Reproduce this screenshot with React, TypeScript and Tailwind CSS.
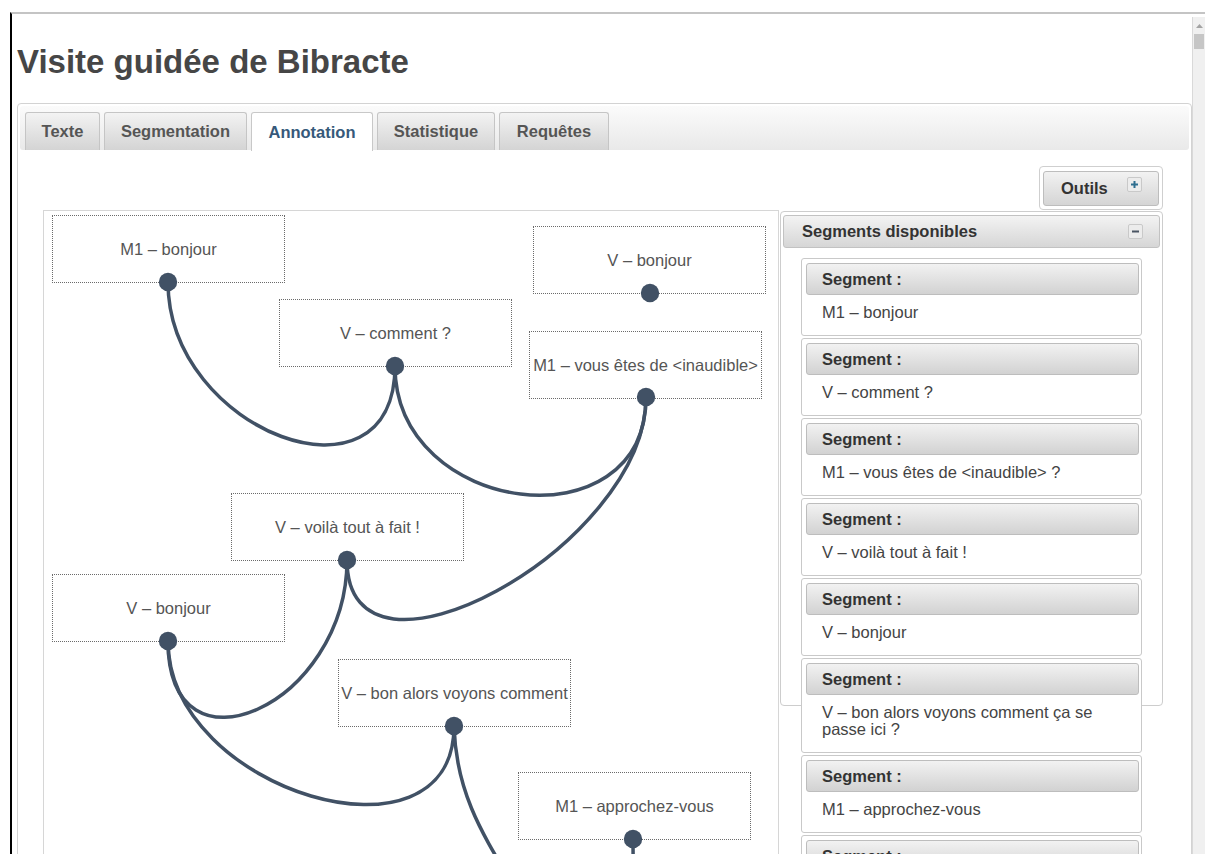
import React from "react";

const tabs = [
  { label: "Texte", w: "w-[75px]", active: false },
  { label: "Segmentation", w: "w-[143px]", active: false },
  { label: "Annotation", w: "w-[122px]", active: true },
  { label: "Statistique", w: "w-[118px]", active: false },
  { label: "Requêtes", w: "w-[110px]", active: false },
];

const nodes = [
  { text: "M1 – bonjour", x: 8, y: 4 },
  { text: "V – bonjour", x: 489, y: 15 },
  { text: "V – comment ?", x: 235, y: 88 },
  { text: "M1 – vous êtes de <inaudible>", x: 485, y: 120 },
  { text: "V – voilà tout à fait !", x: 187, y: 282 },
  { text: "V – bonjour", x: 8, y: 363 },
  { text: "V – bon alors voyons comment", x: 294, y: 448 },
  { text: "M1 – approchez-vous", x: 474, y: 561 },
];

const circles: [number, number][] = [
  [124, 71],
  [606, 82],
  [351, 155],
  [602, 186],
  [303, 349],
  [124, 430],
  [410, 515],
  [589, 628],
];

const paths = [
  "M124 71 C124 221, 351 305, 351 155",
  "M351 155 C351 305, 602 336, 602 186",
  "M602 186 C602 336, 303 499, 303 349",
  "M303 349 C303 494, 124 575, 124 430",
  "M124 430 C124 580, 410 665, 410 515",
  "M410 515 C412 579, 436 619, 466 669",
  "M589 628 C589 660, 590 680, 592 700",
];

const segments = [
  "M1 – bonjour",
  "V – comment ?",
  "M1 – vous êtes de <inaudible> ?",
  "V – voilà tout à fait !",
  "V – bonjour",
  "V – bon alors voyons comment ça se passe ici ?",
  "M1 – approchez-vous",
  "V – approchez-vous",
];

function PlusIcon() {
  return (
    <div className="w-[15px] h-[15px] rounded-[2px] border border-[#c9c9c9] bg-[#ececec] flex items-center justify-center">
      <svg width="9" height="9" viewBox="0 0 9 9">
        <rect x="3.5" y="1" width="2" height="7" fill="#2f6f8f" />
        <rect x="1" y="3.5" width="7" height="2" fill="#2f6f8f" />
      </svg>
    </div>
  );
}

function MinusIcon() {
  return (
    <div className="w-[15px] h-[15px] rounded-[2px] border border-[#c9c9c9] bg-[#ececec] flex items-center justify-center">
      <svg width="9" height="9" viewBox="0 0 9 9">
        <rect x="1" y="3.5" width="7" height="2" fill="#4a5563" />
      </svg>
    </div>
  );
}

export default function App() {
  return (
    <div className="w-[1205px] h-[854px] overflow-hidden bg-white pl-[10px] pt-[12px] font-['Liberation_Sans',Arial,sans-serif]">
      <div className="flex h-[842px] border-l-2 border-l-black border-t-2 border-t-[#c4c4c4]">
        {/* main */}
        <div className="w-[1180px] flex-none pl-[5px] overflow-hidden">
          <h1 className="mt-[29px] h-[38px] leading-[38px] text-[33px] font-bold text-[#464646] whitespace-nowrap">
            Visite guidée de Bibracte
          </h1>
          <div className="mt-[22px] w-[1175px] h-[800px] border border-[#d3d3d3] rounded-[4px] p-[2px]">
            {/* tab bar */}
            <div className="h-[44px] rounded-[3px] bg-linear-to-b from-[#fbfbfb] to-[#e9e9e9] pl-[5px] pt-[6px] flex gap-[4px]">
              {tabs.map((t) => (
                <div
                  key={t.label}
                  className={
                    t.active
                      ? `${t.w} h-[39px] flex items-center justify-center border border-b-0 border-[#c8c8c8] rounded-t-[3px] bg-white text-[16.5px] font-bold text-[#36597a]`
                      : `${t.w} h-[38px] flex items-center justify-center border border-b-0 border-[#c5c5c5] rounded-t-[3px] bg-linear-to-b from-[#f3f3f3] to-[#d4d4d4] text-[16.5px] font-bold text-[#555]`
                  }
                >
                  {t.label}
                </div>
              ))}
            </div>
            {/* content */}
            <div className="pt-[16px] pl-[23px]">
              <div className="w-[1120px]">
                <div className="flex justify-end">
                  <div className="w-[124px] h-[44px] border border-[#cfcfcf] rounded-[4px] px-[3px] pt-[4px] pb-[3px]">
                    <div className="h-full border border-[#bdbdbd] rounded-[3px] bg-linear-to-b from-[#f2f2f2] to-[#d5d5d5] flex pl-[17px] pr-[16px]">
                      <span className="self-center text-[16.5px] font-bold text-[#333]">Outils</span>
                      <div className="ml-auto mt-[5px]">
                        <PlusIcon />
                      </div>
                    </div>
                  </div>
                </div>
                <div className="flex">
                  {/* diagram */}
                  <div className="relative w-[736px] h-[700px] flex-none border border-[#d6d6d6]">
                    {nodes.map((n, i) => (
                      <div
                        key={i}
                        className="absolute w-[233px] h-[68px] border border-dotted border-[#6b6b6b] flex items-center justify-center text-[16.5px] text-[#555] whitespace-nowrap overflow-hidden"
                        style={{ left: n.x, top: n.y }}
                      >
                        {n.text}
                      </div>
                    ))}
                    <svg className="absolute left-0 top-0 overflow-visible" width="734" height="698">
                      {paths.map((d, i) => (
                        <path key={i} d={d} fill="none" stroke="#415165" strokeWidth="3.5" />
                      ))}
                      {circles.map(([cx, cy], i) => (
                        <circle key={i} cx={cx} cy={cy} r="9.2" fill="#415165" />
                      ))}
                    </svg>
                  </div>
                  {/* segments panel */}
                  <div className="ml-[1px] mt-[1px] w-[383px] h-[495px] flex-none border border-[#cdcdcd] rounded-[4px] px-[2px] pt-[3px]">
                    <div className="h-[33px] border border-[#c2c2c2] rounded-[3px] bg-linear-to-b from-[#f3f3f3] to-[#d6d6d6] flex items-center pl-[18px] pr-[16px]">
                      <span className="text-[16.5px] font-bold text-[#333]">Segments disponibles</span>
                      <div className="ml-auto">
                        <MinusIcon />
                      </div>
                    </div>
                    <div className="mt-[10px] ml-[18px] w-[341px] flex flex-col gap-[2px] relative">
                      {segments.map((s, i) => (
                        <div key={i} className="border border-[#c9c9c9] rounded-[3px] bg-white">
                          <div className="mt-[4px] ml-[4px] mr-[2px] h-[32px] border border-[#bdbdbd] rounded-[3px] bg-linear-to-b from-[#f2f2f2] to-[#d2d2d2] flex items-center pl-[15px] text-[16.5px] font-bold text-[#333]">
                            Segment :
                          </div>
                          <div className="pl-[20px] pr-[20px] pt-[9px] pb-[14px] leading-[17px] text-[16.5px] text-[#444]">
                            {s}
                          </div>
                        </div>
                      ))}
                    </div>
                  </div>
                </div>
              </div>
            </div>
          </div>
        </div>
        {/* scrollbar */}
        <div className="w-[13px] flex-none pt-[3px]">
          <div className="h-full bg-[#f0f0f0] border-l border-[#d9d9d9] flex flex-col items-center">
            <svg className="mt-[7px]" width="7" height="4" viewBox="0 0 7 4">
              <polygon points="0,4 7,4 3.5,0" fill="#a3a3a3" />
            </svg>
            <div className="mt-[6px] w-[10px] h-[15px] bg-[#c6c6c6]" />
          </div>
        </div>
      </div>
    </div>
  );
}
